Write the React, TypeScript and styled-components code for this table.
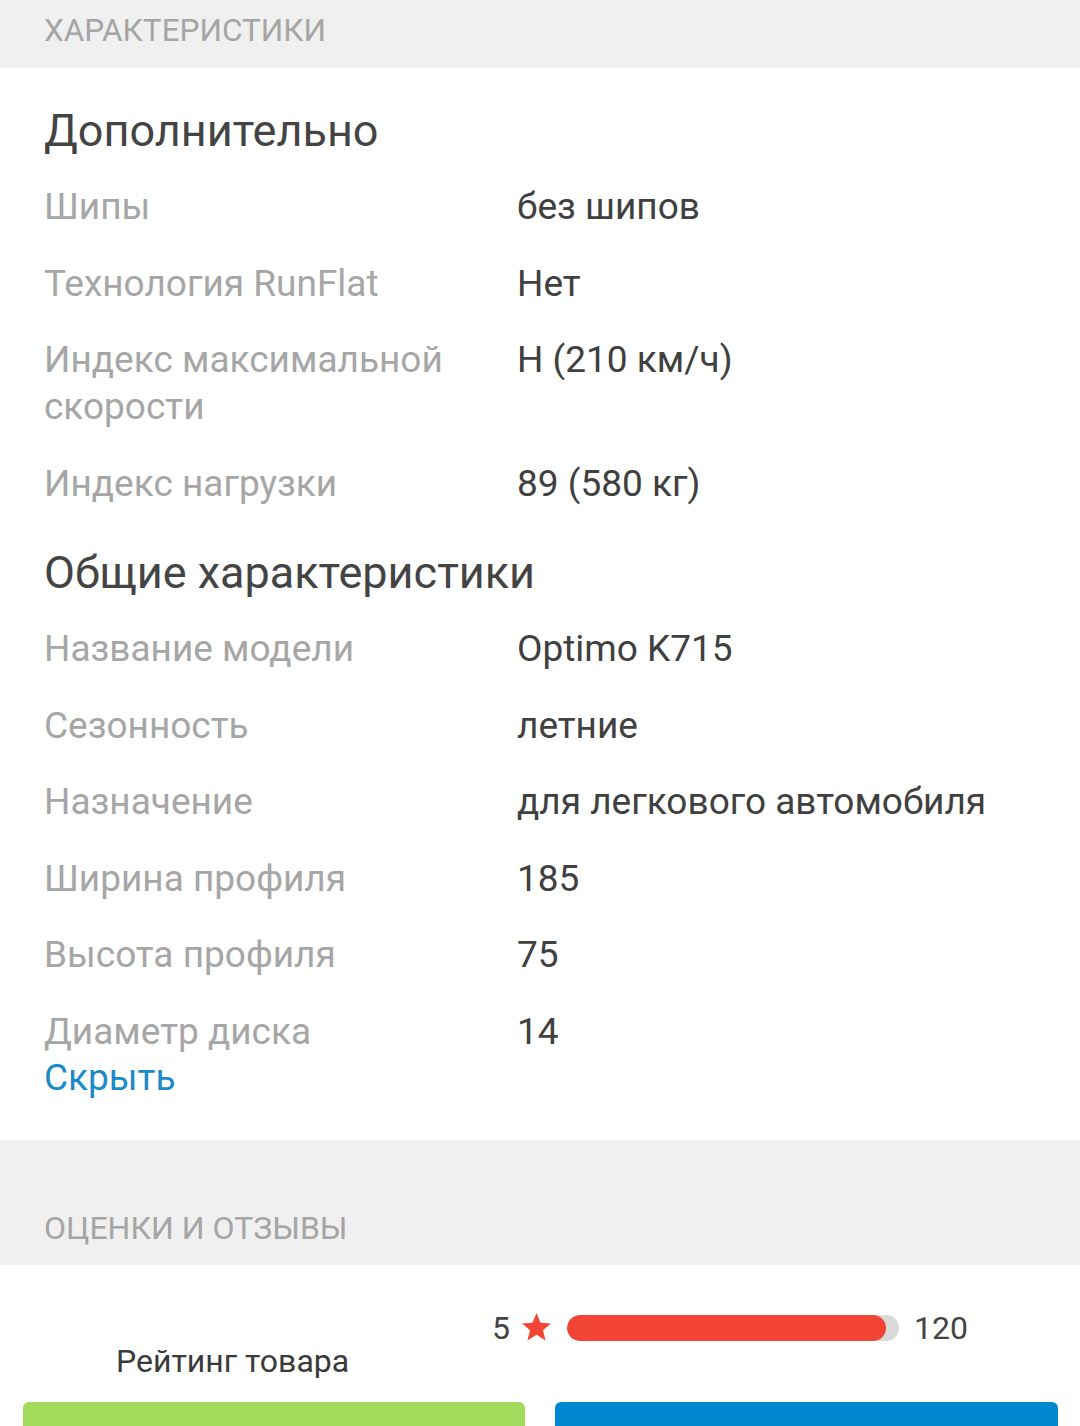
import React from "react";
import styled, { createGlobalStyle } from "styled-components";

const Global = createGlobalStyle`
  html, body { margin: 0; padding: 0; background: #ffffff; }
  body { font-family: Roboto, "Noto Sans", sans-serif; -webkit-font-smoothing: antialiased; }
  * { box-sizing: border-box; }
`;

const Page = styled.div`
  width: 1080px;
  height: 1426px;
  overflow: hidden;
  background: #ffffff;
`;

const BandTop = styled.div`
  height: 68px;
  background: #f0f0f0;
  display: flex;
  align-items: center;
  padding: 0 44px 8px;
  font-size: 31.5px;
  color: #a5a5a5;
`;

const Specs = styled.section`
  padding: 35px 44px 39px;
  display: flex;
  flex-direction: column;
`;

const GroupTitle = styled.h2<{ $first?: boolean }>`
  margin: ${(p) => (p.$first ? "0" : "38.5px")} 0 24px;
  font-size: 45px;
  line-height: 56px;
  font-weight: 400;
  color: #444444;
`;

const Rows = styled.div`
  display: flex;
  flex-direction: column;
  gap: 29.5px;
`;

const Row = styled.div`
  display: grid;
  grid-template-columns: 473px 1fr;
  font-size: 37px;
  line-height: 47px;
`;

const Label = styled.div`
  color: #a6a6a6;
  padding-right: 20px;
`;

const Value = styled.div`
  color: #404040;
`;

const HideLink = styled.a`
  font-size: 37px;
  line-height: 46px;
  color: #1b8bc8;
  text-decoration: none;
`;

const BandReviews = styled.div`
  height: 125px;
  background: #f0f0f0;
  display: flex;
  align-items: flex-end;
  padding: 0 44px 17px;
`;

const ReviewsTitle = styled.div`
  font-size: 32px;
  line-height: 40px;
  color: #a5a5a5;
`;

const Rating = styled.div`
  display: grid;
  grid-template-columns: 462px 1fr;
  padding-top: 43px;
  height: 137px;
`;

const RatingCaption = styled.div`
  align-self: end;
  padding: 0 0 21px 116px;
  font-size: 32px;
  line-height: 40px;
  color: #3a3a3a;
`;

const Bars = styled.div`
  display: flex;
  flex-direction: column;
  padding-left: 30px;
`;

const BarRow = styled.div`
  display: flex;
  align-items: center;
  height: 40px;
  font-size: 32px;
  color: #444444;
`;

const StarNum = styled.span`
  width: 18px;
`;

const StarIcon = styled.svg`
  display: block;
  width: 33px;
  height: 33px;
  margin-left: 10px;
`;

const Track = styled.div`
  width: 332px;
  height: 26px;
  margin: 0 15px 0 14px;
  border-radius: 13px;
  background: #d9d9d9;
  overflow: hidden;
`;

const Fill = styled.div`
  height: 100%;
  border-radius: 13px;
  background: #f24536;
`;

const Count = styled.span`
  font-size: 32px;
`;

const Buttons = styled.div`
  display: grid;
  grid-template-columns: 502px 503px;
  gap: 30px;
  padding: 0 22px 0 23px;
`;

const Btn = styled.div<{ $bg: string }>`
  height: 70px;
  border-radius: 6px;
  background: ${(p) => p.$bg};
`;

const Star = () => (
  <StarIcon viewBox="0 0 24 24">
    <path
      fill="#f24536"
      d="M12 1.5l2.9 7.1 7.6.5-5.8 4.9 1.9 7.4L12 17.3l-6.6 4.1 1.9-7.4L1.5 9.1l7.6-.5z"
    />
  </StarIcon>
);

const groups = [
  {
    title: "Дополнительно",
    rows: [
      ["Шипы", "без шипов"],
      ["Технология RunFlat", "Нет"],
      ["Индекс максимальной скорости", "H (210 км/ч)"],
      ["Индекс нагрузки", "89 (580 кг)"],
    ],
  },
  {
    title: "Общие характеристики",
    rows: [
      ["Название модели", "Optimo K715"],
      ["Сезонность", "летние"],
      ["Назначение", "для легкового автомобиля"],
      ["Ширина профиля", "185"],
      ["Высота профиля", "75"],
      ["Диаметр диска", "14"],
    ],
  },
];

const ratings = [{ stars: 5, count: 120, share: 319 / 332 }];

export default function App() {
  return (
    <Page>
      <Global />
      <BandTop>ХАРАКТЕРИСТИКИ</BandTop>
      <Specs>
        {groups.map((g, i) => (
          <React.Fragment key={g.title}>
            <GroupTitle $first={i === 0}>{g.title}</GroupTitle>
            <Rows>
              {g.rows.map(([l, v]) => (
                <Row key={l}>
                  <Label>{l}</Label>
                  <Value>{v}</Value>
                </Row>
              ))}
            </Rows>
          </React.Fragment>
        ))}
        <HideLink href="#">Скрыть</HideLink>
      </Specs>
      <BandReviews>
        <ReviewsTitle>ОЦЕНКИ И ОТЗЫВЫ</ReviewsTitle>
      </BandReviews>
      <Rating>
        <RatingCaption>Рейтинг товара</RatingCaption>
        <Bars>
          {ratings.map((r) => (
            <BarRow key={r.stars}>
              <StarNum>{r.stars}</StarNum>
              <Star />
              <Track>
                <Fill style={{ width: `${r.share * 100}%` }} />
              </Track>
              <Count>{r.count}</Count>
            </BarRow>
          ))}
        </Bars>
      </Rating>
      <Buttons>
        <Btn $bg="#a3dc5c" />
        <Btn $bg="#0288d1" />
      </Buttons>
    </Page>
  );
}
